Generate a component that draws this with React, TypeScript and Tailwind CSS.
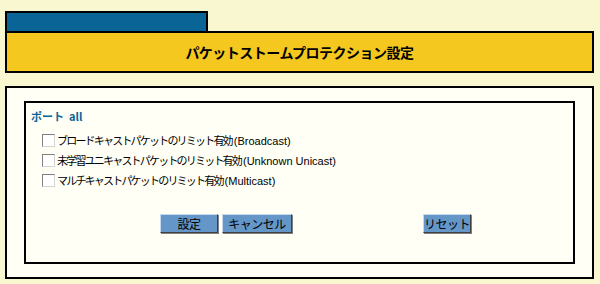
export default function App() {
  const rows = [
    ["ブロードキャストパケットのリミット有効", "(Broadcast)"],
    ["未学習ユニキャストパケットのリミット有効", "(Unknown Unicast)"],
    ["マルチキャストパケットのリミット有効", "(Multicast)"],
  ]
  const btn =
    "h-[19px] p-0 whitespace-nowrap bg-[#6496c8] text-black text-[12px] leading-none tracking-[-0.5px] border border-t-[#c8d8ec] border-l-[#c8d8ec] border-r-[#404040] border-b-[#404040] shadow-[1px_1px_0_#808080]"

  return (
    <div
      className="w-[600px] h-[284px] bg-[#f9f7cf] pt-[11px] pl-[5px] overflow-hidden"
      style={{ fontFamily: '"Noto Sans CJK JP", "Liberation Sans", sans-serif' }}
    >
      <div className="w-[203px] h-[20px] bg-[#0a6496] border-2 border-b-0 border-black" />
      <div className="w-[589px] h-[42px] bg-[#f4c81e] border-2 border-black flex items-center justify-center">
        <h1 className="text-[14px] font-bold text-black tracking-[-0.5px]">パケットストームプロテクション設定</h1>
      </div>

      <div className="mt-[13px] w-[589px] h-[193px] bg-[#fffff5] border-2 border-black pt-[13px] pl-[17px]">
        <div className="w-[551px] h-[163px] border-2 border-black pt-[5px] pl-[5px]">
          <div className="text-[11px] font-bold text-[#0a6496] leading-[16px]">
            ポート<span className="ml-[5px]">all</span>
          </div>
          <div className="mt-[10px] pl-[11px] flex flex-col gap-[7px]">
            {rows.map(([jp, en]) => (
              <label key={jp} className="flex items-center gap-[2px] h-[13px]">
                <span className="w-[13px] h-[13px] bg-white border border-t-[#808080] border-l-[#808080] border-r-[#d4d4d4] border-b-[#d4d4d4] shrink-0" />
                <span className="text-[11px] text-black leading-none whitespace-nowrap">
                  <span className="tracking-[-1.8px]">{jp}</span>
                  <span className="ml-[2px]" style={{ fontFamily: '"Liberation Sans", sans-serif' }}>
                    {en}
                  </span>
                </span>
              </label>
            ))}
          </div>
          <div className="mt-[27px] flex">
            <div className="ml-[129px] flex gap-[4px]">
              <button className={`${btn} w-[58px]`}>設定</button>
              <button className={`${btn} w-[70px]`}>キャンセル</button>
            </div>
            <button className={`${btn} w-[48px] ml-[131px]`}>リセット</button>
          </div>
        </div>
      </div>
    </div>
  )
}
